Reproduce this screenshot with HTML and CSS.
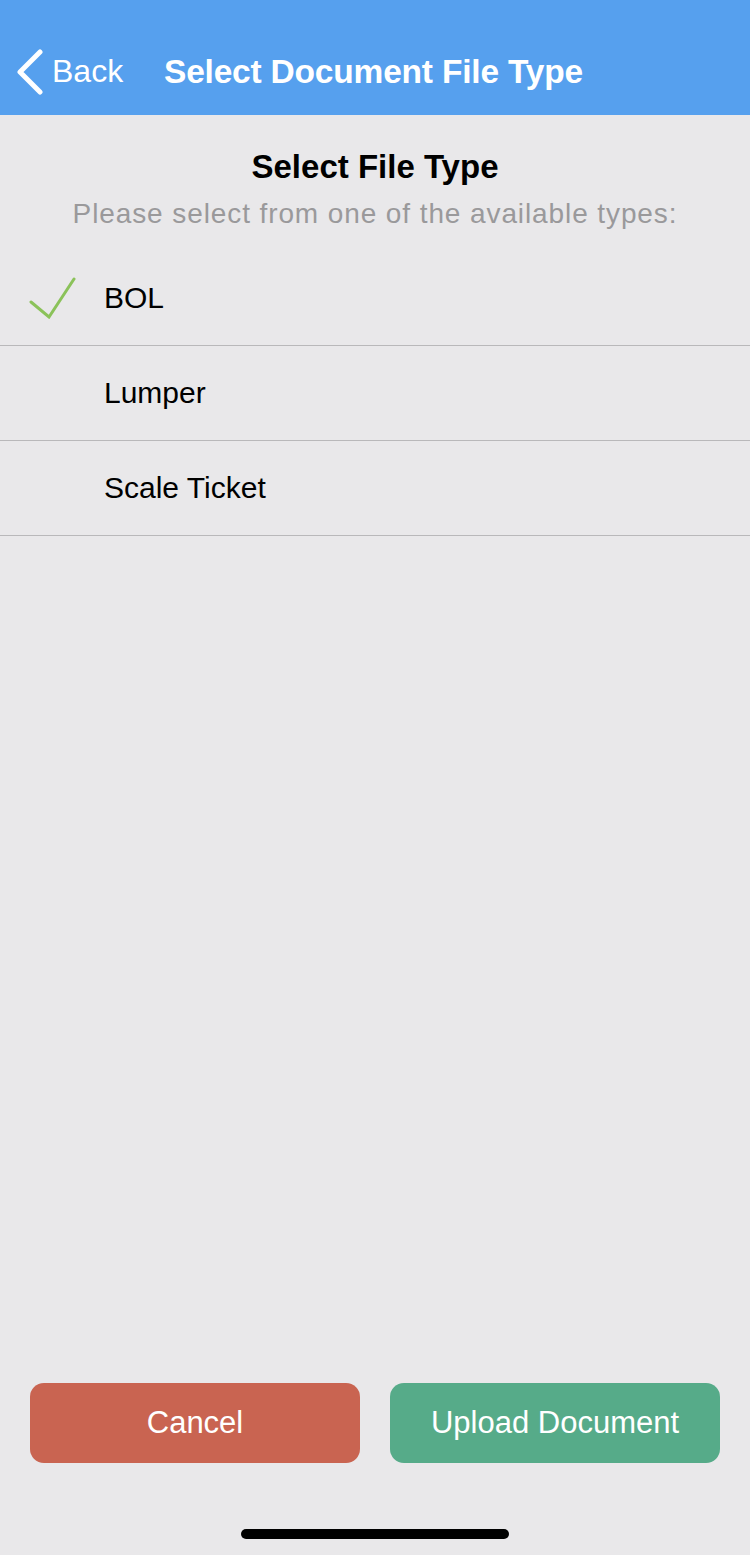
FILE: index.html
```html
<!DOCTYPE html>
<html>
<head>
<meta charset="utf-8">
<link rel="stylesheet" href="styles.css">
</head>
<body>
<div class="screen">
  <header class="nav">
    <div class="back">
      <svg class="chev" width="28" height="46" viewBox="0 0 28 46"><path d="M24 3 L4 23 L24 43" fill="none" stroke="#fff" stroke-width="5" stroke-linecap="round" stroke-linejoin="round"/></svg>
      <span>Back</span>
    </div>
    <div class="nav-title">Select Document File Type</div>
  </header>
  <main class="content">
    <h1 class="heading">Select File Type</h1>
    <p class="sub">Please select from one of the available types:</p>
    <ul class="list">
      <li class="row">
        <span class="check"><svg width="48" height="42" viewBox="0 0 48 42"><path d="M2 25 L20 40 L45 2" fill="none" stroke="#8BC25A" stroke-width="3" stroke-linecap="round" stroke-linejoin="miter"/></svg></span>
        <span class="label">BOL</span>
      </li>
      <li class="row"><span class="check"></span><span class="label">Lumper</span></li>
      <li class="row"><span class="check"></span><span class="label">Scale Ticket</span></li>
    </ul>
  </main>
  <footer class="actions">
    <button class="btn cancel">Cancel</button>
    <button class="btn upload">Upload Document</button>
  </footer>
  <div class="home-bar"><div class="indicator"></div></div>
</div>
</body>
</html>
```
FILE: styles.css
```css
* { box-sizing: border-box; }
html, body { margin: 0; padding: 0; }
body {
  width: 750px;
  height: 1555px;
  background: #E9E8EA;
  font-family: "Liberation Sans", Arial, sans-serif;
  overflow: hidden;
}
.screen {
  height: 1555px;
  display: flex;
  flex-direction: column;
}
.nav {
  height: 115px;
  background: #56A0EE;
  display: flex;
  align-items: center;
  padding: 28px 0 0 16px;
  color: #fff;
}
.back {
  display: flex;
  align-items: center;
  gap: 8px;
  font-size: 32px;
  width: 148px;
}
.nav-title {
  font-size: 33.5px;
  font-weight: bold;
  letter-spacing: -0.2px;
}
.content { flex: 1; }
.heading {
  margin: 32px 0 0;
  text-align: center;
  font-size: 33px;
  font-weight: bold;
  color: #000;
  line-height: 40px;
}
.sub {
  margin: 10px 0 0;
  text-align: center;
  font-size: 28px;
  letter-spacing: 0.9px;
  color: #9A999B;
  line-height: 34px;
}
.list {
  list-style: none;
  margin: 20px 0 0;
  padding: 0;
}
.row {
  height: 95px;
  display: flex;
  align-items: center;
  border-bottom: 1px solid #B9B8BA;
}
.check {
  width: 104px;
  padding-left: 29px;
  display: flex;
  align-items: center;
}
.label {
  font-size: 30px;
  color: #000;
}
.actions {
  display: flex;
  gap: 30px;
  padding: 0 30px;
}
.btn {
  flex: 1;
  height: 80px;
  border: none;
  border-radius: 14px;
  color: #fff;
  font-family: "Liberation Sans", Arial, sans-serif;
  font-size: 31px;
}
.cancel { background: #C96451; }
.upload { background: #56AB89; }
.home-bar {
  height: 92px;
  display: flex;
  justify-content: center;
  padding-top: 66px;
}
.indicator {
  width: 268px;
  height: 10px;
  border-radius: 5px;
  background: #000;
}
```
